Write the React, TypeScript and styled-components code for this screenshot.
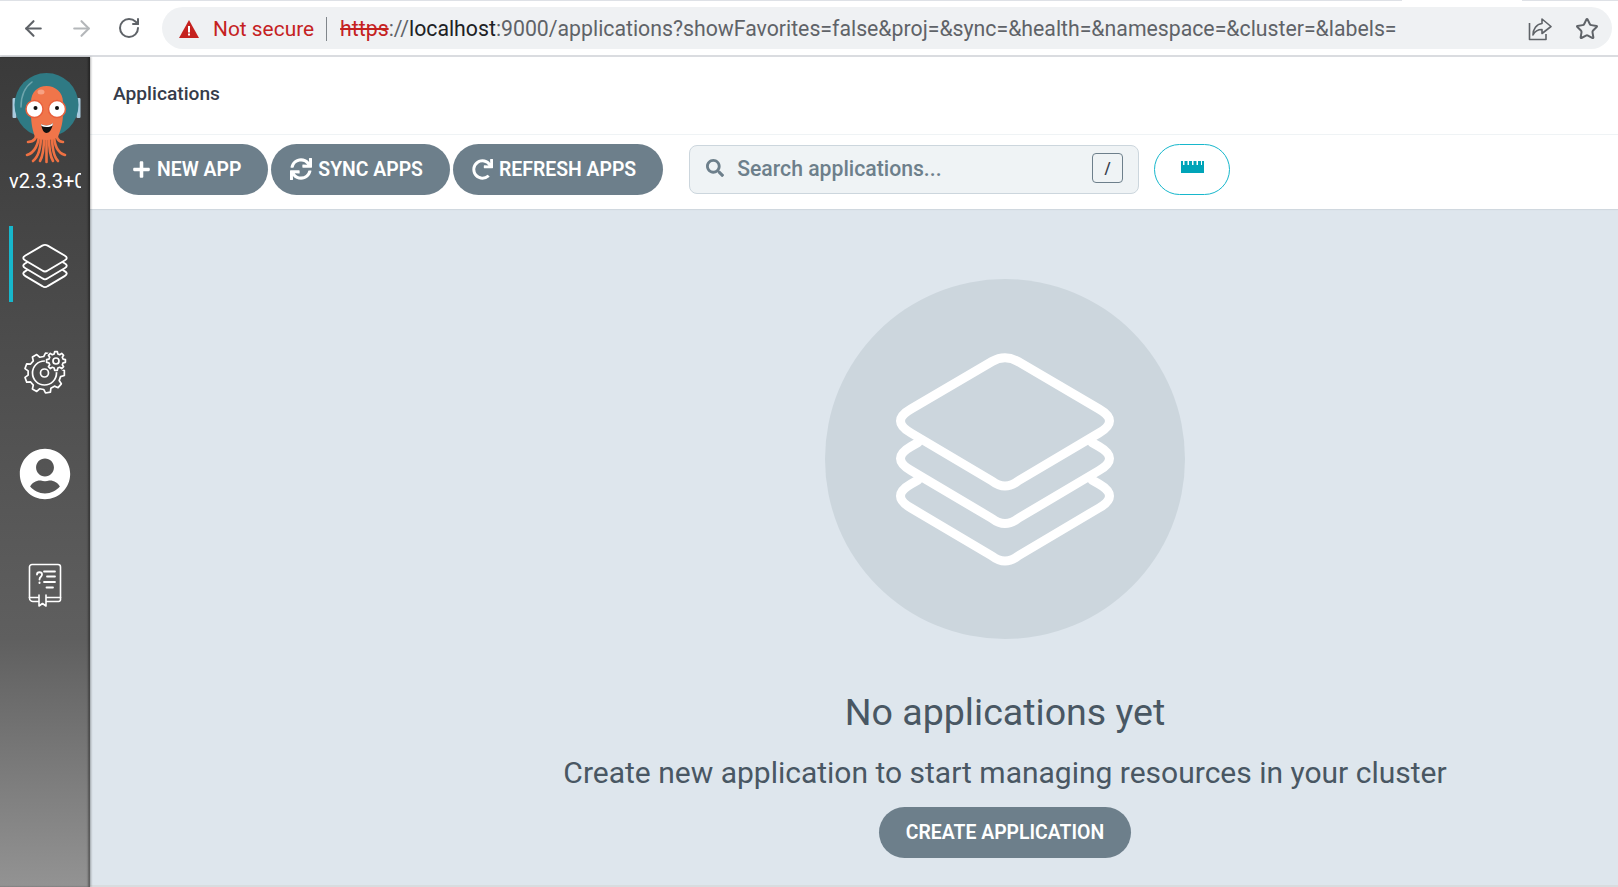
import React from 'react';
import styled, { createGlobalStyle } from 'styled-components';
import { ArrowLeft, ArrowRight, RotateCw, Star } from 'lucide-react';
import { FaPlus, FaSync, FaRedo, FaSearch, FaUserCircle } from 'react-icons/fa';

const GlobalStyle = createGlobalStyle`
  html, body {
    margin: 0;
    padding: 0;
    height: 100%;
    overflow: hidden;
    font-family: Roboto, "Liberation Sans", sans-serif;
  }
  * { box-sizing: border-box; }
`;

const Page = styled.div`
  width: 1618px;
  height: 887px;
  display: flex;
  flex-direction: column;
  background: #fff;
  overflow: hidden;
`;

const BrowserBar = styled.div`
  height: 57px;
  flex: none;
  display: flex;
  align-items: center;
  padding: 1px 6px 0 21px;
  border-bottom: 2px solid #dadce0;
  background: linear-gradient(to right, #dee1e6 1402px, #fff 1402px, #fff 1522px, #dee1e6 1522px) top / 100% 1px no-repeat #fff;
`;

const NavIcons = styled.div`
  display: flex;
  align-items: center;
  gap: 23px;
  width: 141px;
  flex: none;
`;

const AddressPill = styled.div`
  flex: 1;
  height: 42px;
  border-radius: 21px;
  background: #eff1f3;
  display: flex;
  align-items: center;
  padding: 1px 13px 0 17px;
  font-size: 21.25px;
  color: #5f6368;
  white-space: nowrap;
`;

const NotSecure = styled.span`
  color: #c5221f;
  font-size: 20.9px;
  margin-left: 14px;
  padding-right: 12px;
  margin-right: 13px;
  border-right: 1px solid #80868b;
  line-height: 24px;
`;

const Scheme = styled.span`
  color: #c5221f;
  text-decoration: line-through;
`;

const Host = styled.span`
  color: #202124;
`;

const UrlText = styled.span`
  flex: 1;
`;

const PillActions = styled.div`
  display: flex;
  align-items: center;
  gap: 23px;
  color: #5f6368;
`;

const Main = styled.div`
  flex: 1;
  display: flex;
  min-height: 0;
`;

const Sidebar = styled.aside`
  width: 90px;
  flex: none;
  background: linear-gradient(to bottom, #3a3a3a 0%, #4a4a4a 30%, #5f5f5f 70%, #939393 100%);
  box-shadow: inset -2px 0 2px rgba(0, 0, 0, 0.35), 1px 0 2px rgba(0, 0, 0, 0.3);
  z-index: 2;
  display: flex;
  flex-direction: column;
  align-items: center;
  padding-top: 13px;
`;

const LogoMark = styled.svg`
  width: 90px;
  height: 95px;
  flex: none;
  display: block;
`;

const Version = styled.div`
  width: 72px;
  margin: 3px 0 0 0;
  overflow: hidden;
  white-space: nowrap;
  color: #fff;
  font-size: 20px;
  line-height: 26px;
`;

const SideNav = styled.nav`
  width: 100%;
  margin-top: 32px;
  display: flex;
  flex-direction: column;
  gap: 30px;
`;

const SideItem = styled.div<{ $active?: boolean; $offset?: number }>`
  height: 76px;
  margin-left: 9px;
  padding-right: 13px;
  padding-top: ${p => Math.max(p.$offset ?? 0, 0) * 2}px;
  padding-bottom: ${p => Math.max(-(p.$offset ?? 0), 0) * 2}px;
  border-left: 4px solid ${p => (p.$active ? '#17b7cc' : 'transparent')};
  display: flex;
  align-items: center;
  justify-content: center;
  color: #fff;
`;

const Content = styled.main`
  flex: 1;
  min-width: 0;
  display: flex;
  flex-direction: column;
`;

const TitleBar = styled.header`
  height: 78px;
  flex: none;
  display: flex;
  align-items: center;
  padding: 0 0 5px 23px;
  border-bottom: 1px solid #eff3f5;
  font-size: 19.2px;
  font-weight: 500;
  color: #363c4a;
`;

const Toolbar = styled.div`
  height: 74px;
  flex: none;
  display: flex;
  align-items: center;
  padding: 0 0 6px 23px;
  background: #fff;
  box-shadow: 0 1px 1px rgba(0, 0, 0, 0.06);
  z-index: 1;
`;

const PillButton = styled.button`
  height: 51px;
  display: inline-flex;
  align-items: center;
  justify-content: center;
  gap: 6px;
  padding: 0 27px 0 19px;
  margin-right: 3px;
  border: none;
  border-radius: 26px;
  background: #6d7f8b;
  color: #fff;
  font-family: inherit;
  font-size: 19.4px;
  font-weight: 600;
  white-space: nowrap;
`;

const SearchBox = styled.div`
  width: 450px;
  height: 49px;
  margin-left: 23px;
  display: flex;
  align-items: center;
  padding: 0 15px 2px 16px;
  background: #eff3f5;
  border: 1px solid #ccd6dd;
  border-radius: 8px;
  color: #6d7f8b;
  font-size: 21.2px;
  font-weight: 500;
`;

const Placeholder = styled.span`
  flex: 1;
  margin-left: 13px;
`;

const KeyHint = styled.span`
  width: 31px;
  height: 30px;
  border: 1px solid #6d7f8b;
  border-radius: 4px;
  display: flex;
  align-items: center;
  justify-content: center;
  color: #363c4a;
  font-size: 16px;
`;

const RulerButton = styled.button`
  width: 76px;
  height: 51px;
  margin-left: 15px;
  padding: 0 0 4px;
  display: flex;
  align-items: center;
  justify-content: center;
  background: #fff;
  border: 1.5px solid #17b7cc;
  border-radius: 26px;
`;

const EmptyState = styled.section`
  flex: 1;
  background: #dee6ed;
  border-bottom: 2px solid #d8dcdf;
  display: flex;
  flex-direction: column;
  align-items: center;
  padding: 70px 0 0 302px;
  color: #495763;
`;

const EmptyCircle = styled.div`
  width: 360px;
  height: 360px;
  flex: none;
  border-radius: 50%;
  background: #ccd6dd;
  display: flex;
  align-items: center;
  justify-content: center;
`;

const EmptyTitle = styled.h2`
  margin: 51px 0 0;
  font-size: 37.6px;
  line-height: 44px;
  font-weight: 400;
`;

const EmptyText = styled.p`
  margin: 17px 0 0;
  font-size: 30px;
  line-height: 44px;
  white-space: nowrap;
`;

const CreateButton = styled(PillButton)`
  width: 252px;
  margin: 12px 0 0;
  padding: 0;
`;

function StackIcon({ size, stroke }: { size: number; stroke: number }) {
  const layer = (d: number) =>
    `M-87 ${d - 16}L-94 ${d - 12}Q-115 ${d} -94 ${d + 12}L-13 ${d + 60}Q0 ${d + 70} 13 ${d + 60}L94 ${d + 12}Q115 ${d} 94 ${d - 12}L87 ${d - 16}`;
  return (
    <svg width={size} height={size * (220 / 240)} viewBox="-120 -72 240 220" fill="none" stroke="#fff" strokeWidth={stroke} strokeLinejoin="round" strokeLinecap="round">
      <path d="M-13 -59.5Q0 -67 13 -59.5L94 -12Q115 0 94 12L13 60Q0 70 -13 60L-94 12Q-115 0 -94 -12Z" />
      <path d={layer(37.5)} />
      <path d={layer(75)} />
    </svg>
  );
}

function Logo() {
  return (
    <LogoMark viewBox="0 15 90 95">
      <rect x="12.5" y="43" width="4" height="20" rx="1" fill="#a9cbdf" />
      <rect x="76.5" y="43" width="4" height="20" rx="1" fill="#a9cbdf" />
      <circle cx="46.5" cy="50" r="32" fill="#2f7a84" />
      <path d="M21 52C21 40 25 32 32 27" fill="none" stroke="#6fa5ad" strokeWidth="1.5" strokeLinecap="round" />
      <g fill="none" stroke="#ee7143" strokeWidth="2.6" strokeLinecap="round">
        <path d="M37 76C37 84 33 87 28 87" />
        <path d="M39 78C39 90 34 98 27 100" />
        <path d="M41 80C41 94 38 102 33 106" />
        <path d="M44 82C44 94 43 101 40 106" />
        <path d="M46.500 82V107" />
        <path d="M49 82C49 94 50 101 53 106" />
        <path d="M52 80C52 94 54 102 58 106" />
        <path d="M54 78C54 90 58 98 65 100" />
        <path d="M56 76C56 84 59 87 63 87" />
      </g>
      <path d="M31 58V47C31 37 38 31 46.5 31C55 31 63 37 63 47V58C63 70 60 76 58 82C52 86 41 86 35 82C33 76 31 70 31 58Z" fill="#f0754a" />
      <ellipse cx="41" cy="37" rx="3.5" ry="2.5" fill="#f7a183" />
      <circle cx="34.5" cy="54" r="8.500" fill="#fff" stroke="#e8603c" strokeWidth="1.5" />
      <circle cx="57" cy="54" r="8.500" fill="#fff" stroke="#e8603c" strokeWidth="1.5" />
      <circle cx="35.5" cy="53" r="2" fill="#111" />
      <circle cx="57" cy="53" r="2" fill="#111" />
      <path d="M41 69C44 71 50 71 53 68C52 75 49 78 46.5 78C43.500 78 42 74 41 69Z" fill="#111" />
      <path d="M41 69C44 71 50 71 53 68L52.500 70.500C49 72.500 45 72.500 41.500 71Z" fill="#fff" />
    </LogoMark>
  );
}

function gearPath(cx: number, cy: number, outer: number, inner: number, teeth: number) {
  const pts: string[] = [];
  const step = (Math.PI * 2) / teeth;
  for (let i = 0; i < teeth; i++) {
    const a = i * step;
    const at = (r: number, o: number) =>
      `${(cx + r * Math.cos(a + o * step)).toFixed(2)} ${(cy + r * Math.sin(a + o * step)).toFixed(2)}`;
    pts.push(at(inner, -0.32), at(outer, -0.18), at(outer, 0.18), at(inner, 0.32));
  }
  return `M${pts.join('L')}Z`;
}

function SettingsIcon() {
  return (
    <svg width="46" height="46" viewBox="22 348 46 46" fill="none" stroke="#fff" strokeWidth="1.7" strokeLinejoin="round">
      <mask id="gear-cut">
        <rect x="20" y="340" width="50" height="60" fill="#fff" />
        <circle cx="56" cy="360" r="12" fill="#000" />
      </mask>
      <g mask="url(#gear-cut)">
        <path d={gearPath(44.5, 372, 20, 16.5, 9)} />
        <circle cx="44.5" cy="372" r="12" />
      </g>
      <circle cx="44.5" cy="372" r="4" />
      <path d={gearPath(56, 360, 9.5, 7.3, 8)} />
      <circle cx="56" cy="360" r="3" />
    </svg>
  );
}

function DocsIcon() {
  return (
    <svg width="34" height="44" viewBox="0 0 34 44" fill="none" stroke="#fff" strokeWidth="1.6" strokeLinecap="round" strokeLinejoin="round">
      <path d="M4 1.5H30A2.5 2.5 0 0 1 32.500 4V36A2 2 0 0 1 30.500 38.500H5A3.500 3.500 0 0 1 1.500 35V4A2.500 2.500 0 0 1 4 1.500Z" />
      <path d="M1.500 34.500H32.500" />
      <path d="M9 11.500C9 8.500 14 8.500 14 11.500C14 14 11.500 13.500 11.500 16.500" strokeWidth="1.8" />
      <path d="M11.500 19.500V20" strokeWidth="2" />
      <path d="M16 8.500H27M19 13.500H27M16 19H27M18.500 24.500H25" strokeWidth="1.8" />
      <path d="M11 32V43L14.500 40.500L18 43V32" fill="#5d5d5d" />
    </svg>
  );
}

function WarningIcon() {
  return (
    <svg width="20" height="18" viewBox="0 0 20 18">
      <path d="M10 0L20 18H0Z" fill="#c5221f" />
      <rect x="9" y="6" width="2" height="6.500" fill="#fff" />
      <rect x="9" y="13.500" width="2" height="2" fill="#fff" />
    </svg>
  );
}

function ShareIcon() {
  return (
    <svg width="24" height="24" viewBox="0 0 24 24" fill="none" stroke="#5f6368" strokeWidth="1.600" strokeLinejoin="round">
      <path d="M1.500 6V22.500H18V17" />
      <path d="M14 2L23 9.500L14 16.500V12.500C10 12.500 7 14 5 18C5 12 8.500 7 14 6.500Z" />
    </svg>
  );
}

function RulerIcon() {
  return (
    <svg width="23" height="12" viewBox="0 0 23 12">
      <path d="M0 0H2V4H3.500V0H6.500V4H8V0H11V4H12.500V0H15.500V4H17V0H20V4H21V0H23V12H0Z" fill="#00a4b8" />
    </svg>
  );
}

export default function App() {
  return (
    <Page>
      <GlobalStyle />
      <BrowserBar>
        <NavIcons>
          <ArrowLeft size={25} color="#5f6368" strokeWidth={2} />
          <ArrowRight size={25} color="#b4b7ba" strokeWidth={2} />
          <RotateCw size={24} color="#5f6368" strokeWidth={2} />
        </NavIcons>
        <AddressPill>
          <WarningIcon />
          <NotSecure>Not secure</NotSecure>
          <UrlText>
            <Scheme>https</Scheme>://<Host>localhost</Host>:9000/applications?showFavorites=false&amp;proj=&amp;sync=&amp;health=&amp;namespace=&amp;cluster=&amp;labels=
          </UrlText>
          <PillActions>
            <ShareIcon />
            <Star size={24} color="#5f6368" strokeWidth={2} />
          </PillActions>
        </AddressPill>
      </BrowserBar>
      <Main>
        <Sidebar>
          <Logo />
          <Version>v2.3.3+0ad18c</Version>
          <SideNav>
            <SideItem $active $offset={2}>
              <StackIcon size={50} stroke={9} />
            </SideItem>
            <SideItem $offset={2}>
              <SettingsIcon />
            </SideItem>
            <SideItem $offset={-2}>
              <FaUserCircle size={52} />
            </SideItem>
            <SideItem $offset={3}>
              <DocsIcon />
            </SideItem>
          </SideNav>
        </Sidebar>
        <Content>
          <TitleBar>Applications</TitleBar>
          <Toolbar>
            <PillButton><FaPlus size={19} />NEW APP</PillButton>
            <PillButton><FaSync size={22} />SYNC APPS</PillButton>
            <PillButton><FaRedo size={21} />REFRESH APPS</PillButton>
            <SearchBox>
              <FaSearch size={18} />
              <Placeholder>Search applications...</Placeholder>
              <KeyHint>/</KeyHint>
            </SearchBox>
            <RulerButton><RulerIcon /></RulerButton>
          </Toolbar>
          <EmptyState>
            <EmptyCircle>
              <StackIcon size={240} stroke={9} />
            </EmptyCircle>
            <EmptyTitle>No applications yet</EmptyTitle>
            <EmptyText>Create new application to start managing resources in your cluster</EmptyText>
            <CreateButton>CREATE APPLICATION</CreateButton>
          </EmptyState>
        </Content>
      </Main>
    </Page>
  );
}
